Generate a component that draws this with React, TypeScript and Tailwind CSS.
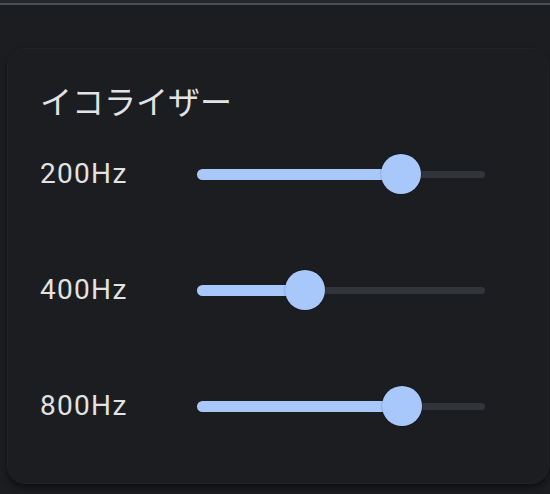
import React, { useState } from 'react';

interface Band {
  label: string;
  value: number; // 0..100
}

const bands: Band[] = [
  { label: '200Hz', value: 70.8 },
  { label: '400Hz', value: 37.5 },
  { label: '800Hz', value: 71.2 },
];

const EqSlider = ({ value }: { value: number }) => {
  return (
    <div className="relative w-[288px] h-[40px] flex items-center">
      <div className="absolute left-0 right-0 h-[7px] rounded-full bg-[#313438]" />
      <div
        className="absolute left-0 h-[11px] rounded-full bg-[#a8c7fa]"
        style={{ width: `${value}%` }}
      />
      <div
        className="absolute w-[40px] h-[40px] -ml-[20px] rounded-full bg-[#a8c7fa] shadow-[0_0_2px_rgba(0,0,0,0.35)]"
        style={{ left: `${value}%` }}
      />
    </div>
  );
};

const App = () => {
  const [values] = useState(bands);

  return (
    <div className="w-[550px] h-[494px] bg-[#1b1d21] flex flex-col overflow-hidden">
      <div className="h-[3px] bg-[#25282c]" />
      <div className="h-[2px] bg-[#4a4d52]" />
      <div className="mt-[43px] ml-[7px] mr-[1px] h-[436px] rounded-[18px] border border-[#1f2226] bg-[#1b1d21] shadow-[0_4px_6px_rgba(0,0,0,0.45)] pl-[32px] pt-[31px]">
        <div
          className="text-[32px] leading-[40px] text-[#e3e3e3]"
          style={{ fontFamily: '"Noto Sans CJK JP", "Noto Sans", sans-serif' }}
        >
          イコライザー
        </div>
        <div className="mt-[34px] flex flex-col gap-[76px]">
          {values.map((b) => (
            <div key={b.label} className="flex items-center h-[40px]">
              <div
                className="w-[157px] text-[28px] tracking-[1.3px] text-[#e2e2e2]"
                style={{ fontFamily: 'Roboto, "Noto Sans", sans-serif' }}
              >
                {b.label}
              </div>
              <EqSlider value={b.value} />
            </div>
          ))}
        </div>
      </div>
    </div>
  );
};

export default App;
